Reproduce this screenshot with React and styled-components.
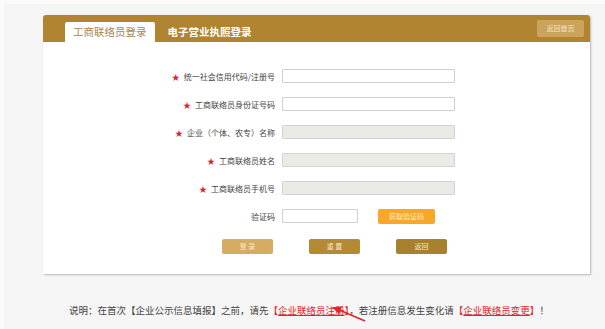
import React from 'react';
import styled, { createGlobalStyle } from 'styled-components';

const GlobalStyle = createGlobalStyle`
	html, body {
		margin: 0;
		padding: 0;
		background: #f5f5f5;
		font-family: "Noto Sans CJK SC", "Noto Sans", sans-serif;
	}
`;

const fields = [
	{ label: '统一社会信用代码/注册号', required: true, disabled: false },
	{ label: '工商联络员身份证号码', required: true, disabled: false },
	{ label: '企业（个体、农专）名称', required: true, disabled: true },
	{ label: '工商联络员姓名', required: true, disabled: true },
	{ label: '工商联络员手机号', required: true, disabled: true },
];

const App = () => {
	return (
		<Page>
			<GlobalStyle />
			<Card>
				<Header>
					<Tab active>工商联络员登录</Tab>
					<Tab>电子营业执照登录</Tab>
					<HomeButton>返回首页</HomeButton>
				</Header>
				<Body>
					{fields.map((f) => (
						<Row key={f.label}>
							<Label>
								{f.required && <Star>★</Star>}
								{f.label}
							</Label>
							<Input disabled={f.disabled} readOnly />
						</Row>
					))}
					<Row>
						<Label>验证码</Label>
						<Input small readOnly />
						<CodeButton>获取验证码</CodeButton>
					</Row>
					<Actions>
						<ActionButton tone="#d4ad62">登 录</ActionButton>
						<ActionButton tone="#b58a35">重 置</ActionButton>
						<ActionButton tone="#a8812f">返回</ActionButton>
					</Actions>
				</Body>
			</Card>
			<Footer>
				说明：在首次【企业公示信息填报】之前，请先
				<Link>【<u>企业联络员注册</u>】</Link>
				，若注册信息发生变化请
				<Link>【<u>企业联络员变更</u>】</Link>！
				<Arrow width="36" height="18" viewBox="0 0 36 18">
					<line x1="34" y1="16" x2="6" y2="4" stroke="#e1252b" strokeWidth="1.6" />
					<polygon points="1,2 11,2 8,9" fill="#e1252b" />
				</Arrow>
			</Footer>
		</Page>
	);
};

export default App;

const Page = styled.div`
	min-height: 329px;
	box-sizing: border-box;
	padding: 11px 15px 0 39px;
	background: #f5f5f5;
	border-left: 4px solid #fbfbfb;
	border-top: 4px solid #fbfbfb;
`;
const Card = styled.div`
	width: 547px;
	background: #fff;
	border-radius: 3px 3px 0 0;
	box-shadow: 1px 1px 2px rgba(0, 0, 0, 0.25);
`;
const Header = styled.div`
	height: 27px;
	background: #b08431;
	border-radius: 3px 3px 0 0;
	display: flex;
	align-items: flex-end;
	padding: 0 6px 0 22px;
	column-gap: 5px;
`;
const Tab = styled.div`
	height: 20px;
	line-height: 20px;
	padding: 0 8px;
	font-size: 10.5px;
	border-radius: 2px 2px 0 0;
	background: ${(p) => (p.active ? '#fff' : 'transparent')};
	color: ${(p) => (p.active ? '#a88652' : '#fff')};
	font-weight: ${(p) => (p.active ? 'normal' : 'bold')};
`;
const HomeButton = styled.div`
	margin-left: auto;
	align-self: center;
	width: 47px;
	height: 17px;
	line-height: 17px;
	text-align: center;
	font-size: 7px;
	color: #f3e4c2;
	background: #cba35a;
	border-radius: 2px;
`;
const Body = styled.div`
	padding: 27px 0 20px;
	display: flex;
	flex-direction: column;
	row-gap: 14px;
`;
const Row = styled.div`
	display: flex;
	align-items: center;
	height: 14px;
`;
const Label = styled.div`
	width: 239px;
	padding-right: 7px;
	box-sizing: border-box;
	text-align: right;
	font-size: 8px;
	color: #444;
	white-space: nowrap;
`;
const Star = styled.span`
	color: #d8222d;
	margin-right: 4px;
	font-size: 8px;
`;
const Input = styled.input`
	box-sizing: border-box;
	width: ${(p) => (p.small ? '76px' : '173px')};
	height: 14px;
	margin: 0;
	padding: 0 3px;
	border: 1px solid #cfcfcf;
	border-radius: 1px;
	background: #fff;
	&:disabled {
		background: #ebebe5;
		border-color: #d3d3d3;
	}
`;
const CodeButton = styled.div`
	margin-left: 20px;
	width: 57px;
	height: 15px;
	line-height: 15px;
	text-align: center;
	font-size: 7px;
	color: #fde9c6;
	background: #f7a82a;
	border-radius: 2px;
`;
const Actions = styled.div`
	display: flex;
	column-gap: 36px;
	padding-left: 179px;
	margin-top: 2px;
`;
const ActionButton = styled.div`
	width: 51px;
	height: 15px;
	line-height: 15px;
	text-align: center;
	font-size: 7px;
	color: #f6e7c8;
	background: ${(p) => p.tone};
	border-radius: 2px;
`;
const Footer = styled.div`
	position: relative;
	margin: 29px 0 0 26px;
	font-size: 9.5px;
	color: #444;
	white-space: nowrap;
`;
const Link = styled.span`
	color: #e1252b;
	u {
		text-decoration: underline;
	}
`;
const Arrow = styled.svg`
	position: absolute;
	left: 262px;
	top: 2px;
`;
